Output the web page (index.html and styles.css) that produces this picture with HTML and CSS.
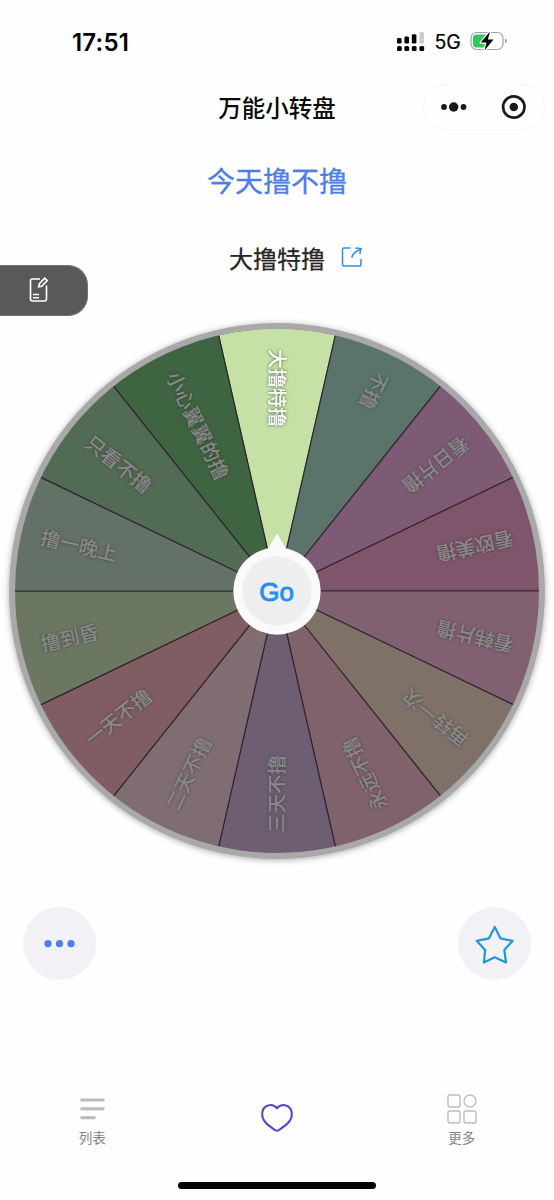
FILE: index.html
```html
<!DOCTYPE html>
<html lang="zh-CN">
<head>
<meta charset="utf-8">
<title>万能小转盘</title>
<link rel="stylesheet" href="styles.css">
</head>
<body>
<div class="screen">
  <header class="status">
    <span class="time">17:51</span>
    <div class="indicators">
      <svg class="signal" width="28" height="20" viewBox="0 0 28 20">
        <g fill="#000"><rect x="0" y="6" width="4.6" height="5.6" rx="1.4"/><rect x="7.4" y="4.5" width="4.6" height="7.1" rx="1.4"/><rect x="14.8" y="2.2" width="4.6" height="9.4" rx="1.4"/>
        <rect x="0" y="14" width="4.8" height="5" rx="1.5"/><rect x="7.4" y="14" width="4.8" height="5" rx="1.5"/><rect x="14.8" y="14" width="4.8" height="5" rx="1.5"/><rect x="22.4" y="14" width="4.8" height="5" rx="1.5"/></g>
        <rect x="22.4" y="0" width="4.6" height="11.6" rx="1.2" fill="#ccc"/>
      </svg>
      <span class="net">5G</span>
      <svg class="battery" width="38" height="22" viewBox="0 0 38 22">
        <rect x="1" y="2.5" width="32" height="17" rx="5.5" fill="#fff" stroke="#a3a3a3" stroke-width="1.2"/>
        <path d="M6.5 4.5H16V17.500H6.500Q3 17.500 3 14V8Q3 4.500 6.500 4.500Z" fill="#34c759"/>
        <path d="M35 8.500Q37 9.200 37 11T35 13.500Z" fill="#a3a3a3"/>
        <path d="M20 1.500L10.800 12.500H16.500L14.500 20.500L23.500 9.500H17.800Z" fill="#000" stroke="#fff" stroke-width="2.400" paint-order="stroke" stroke-linejoin="round"/>
      </svg>
    </div>
  </header>
  <nav class="navbar">
    <h1>万能小转盘</h1>
    <div class="capsule">
      <svg width="60" height="28" viewBox="0 0 60 28" fill="#1a1a1a"><circle cx="20" cy="14" r="2.900"/><circle cx="29.700" cy="14" r="4.700"/><circle cx="39.500" cy="14" r="2.900"/></svg>
      <i class="divider"></i>
      <svg width="60" height="28" viewBox="0 0 60 28"><circle cx="29.800" cy="14" r="10.700" fill="none" stroke="#1a1a1a" stroke-width="2.700"/><circle cx="29.800" cy="14" r="4.300" fill="#1a1a1a"/></svg>
    </div>
  </nav>
  <h2 class="question">今天撸不撸</h2>
  <div class="result">
    <span>大撸特撸</span>
    <svg width="22" height="22" viewBox="0 0 22 22" fill="none" stroke="#2b8fe6" stroke-width="1.500"><path d="M9.500 2H3Q1.500 2 1.500 3.500V18.500Q1.500 20 3 20H18.500Q20 20 20 18.500V13"/><path d="M10.700 11.500C12 8 14.500 5 19.500 3.500M14.500 2L20 2.700L18.800 8"/></svg>
  </div>
  <button class="edit" aria-label="编辑">
    <svg width="22" height="28" viewBox="0 0 22 28" fill="none" stroke="#fff" stroke-width="1.600"><path d="M12 3H4.500Q2.500 3 2.500 5V23Q2.500 25 4.500 25H16.500Q18.500 25 18.500 23V9.500"/><path d="M10.700 10.800L11.400 7.700L16.700 2.200L19.200 4.600L13.800 10.200Z"/><path d="M5 18.500H11M5 21.700H11"/></svg>
  </button>

  <main class="wheel-area">
    <svg id="wheel" class="wheel" width="554" height="560" viewBox="-277 -280 554 560">
      <circle class="rim" r="267.700"/>
      <g id="slices"></g>
      <g id="labels"></g>
      <g class="go">
        <path d="M-11 -39L0 -57.500L11 -39Z" fill="#fafafa"/>
        <circle r="43.700" fill="#fafafa"/>
        <circle r="34.700" fill="#eee"/>
        <text class="go-text" x="-0.500" y="9.500">Go</text>
      </g>
    </svg>
  </main>

  <section class="actions">
    <button class="round" aria-label="更多选项"><svg width="40" height="40" viewBox="0 0 40 40" fill="#4d7fe8"><circle cx="8" cy="19.700" r="3.600"/><circle cx="19.500" cy="19.700" r="3.600"/><circle cx="31" cy="19.700" r="3.600"/></svg></button>
    <button class="round" aria-label="收藏"><svg width="44" height="44" viewBox="0 0 44 44" fill="none" stroke="#2098d8" stroke-width="2.200" stroke-linejoin="round"><path d="M21.800 5L27.400 16.300L39.600 18.900L31.300 27.900L33 40.500L21.800 35.300L10.900 40.500L12.200 27.900L3.800 18.900L16 16.300Z"/></svg></button>
  </section>

  <footer class="tabs">
    <div class="tab">
      <svg width="30" height="32" viewBox="0 0 30 32" fill="#bbb"><rect x="3.500" y="5.500" width="24" height="3"/><rect x="3.500" y="14.300" width="24" height="3"/><rect x="3.500" y="23.200" width="15" height="3"/></svg>
      <span>列表</span>
    </div>
    <div class="tab heart">
      <svg width="34" height="30" viewBox="0 0 34 30" fill="none" stroke="#5446cf" stroke-width="2.100" stroke-linejoin="round"><path d="M17 5.300C13 .300 2.200 .500 2.200 11.500C2.200 18.500 9 23 15.200 27.200Q17 28.300 18.800 27.200C25 23 31.800 18.500 31.800 11.500C31.800 .500 21 .300 17 5.300Z"/></svg>
    </div>
    <div class="tab">
      <svg width="30" height="32" viewBox="0 0 30 32" fill="none" stroke="#bdbdbd" stroke-width="1.400"><rect x="1" y="2" width="12" height="12" rx="2"/><circle cx="23" cy="8" r="6"/><rect x="1" y="18" width="12" height="12" rx="2"/><rect x="17" y="18" width="12" height="12" rx="2"/></svg>
      <span>更多</span>
    </div>
  </footer>
  <div class="home"></div>
</div>
<script src="wheel.js"></script>
</body>
</html>
```
FILE: styles.css
```css
* { box-sizing: border-box; }
body { margin: 0; background: #fefefe; font-family: "Liberation Sans", "Noto Sans CJK SC", sans-serif; }
h1, h2 { margin: 0; }
button { border: 0; padding: 0; }
svg { display: block; flex: none; }
.screen { width: 554px; height: 1200px; display: flex; flex-direction: column; overflow: hidden; }
.status { height: 84px; padding: 0 46px 0 72px; display: flex; align-items: center; justify-content: space-between; }
.time { padding-top: 1px; font: 600 24px/28px Inter, sans-serif; letter-spacing: .2px; }
.indicators { display: flex; align-items: center; }
.signal { margin-top: -1px; }
.net { width: 45px; text-align: center; font: 400 19.500px/24px Inter, sans-serif; letter-spacing: -.2px; -webkit-text-stroke: .2px #000; }
.battery { margin-top: -2px; }
.navbar { height: 46px; padding: 0 10px; display: grid; grid-template-columns: 121px 1fr 121px; align-items: center; }
.navbar h1 { grid-column: 2; padding-top: 4px; text-align: center; font-size: 23.500px; line-height: 34px; font-weight: 500; color: #0a0a0a; }
.capsule { width: 122px; height: 46px; border: 1.500px solid #f5f5f5; border-radius: 23px; display: flex; align-items: center; justify-content: center; }
.divider { width: 1px; height: 28px; background: #f2f2f2; }
.question { margin-top: 32px; height: 42px; text-align: center; font-size: 28px; line-height: 42px; font-weight: 400; color: #4c7ee6; -webkit-text-stroke: .3px #4c7ee6; }
.result { margin-top: 38px; height: 36px; padding-left: 229px; display: flex; align-items: center; gap: 16px; font-size: 24px; line-height: 36px; color: #262626; -webkit-text-stroke: .25px #262626; }
.result svg { margin-top: -7px; }
.edit { margin-top: -13.500px; width: 88px; height: 51px; border: 1px solid #737373; border-left: 0; border-radius: 0 20px 20px 0; background: #595959; display: flex; align-items: center; padding-left: 28px; }
.wheel-area { margin-top: -4.500px; height: 560px; }
.rim { fill: #a9a9a9; filter: drop-shadow(0 1px 3px rgba(0, 0, 0, .35)); }
.slice { stroke: rgba(45, 30, 40, .85); stroke-width: 1.200; }
.slice-edge { fill: none; stroke: #a9a9a9; stroke-width: 5.700; }
.label { font: 500 19.500px "Noto Sans CJK SC", sans-serif; fill: #898989; text-shadow: 0 0 3px rgba(35, 35, 35, .6); }
.label-active { fill: #fff; text-shadow: 0 0 3px rgba(0, 0, 0, .65); }
.go-text { font: 400 26px "Liberation Sans", sans-serif; fill: #248ff3; stroke: #248ff3; stroke-width: .9px; text-anchor: middle; }
.actions { margin-top: 36px; height: 73px; padding: 0 23px; display: flex; justify-content: space-between; }
.round { width: 73px; height: 73px; border-radius: 50%; background: #f1f1f6; display: flex; align-items: center; justify-content: center; }
.tabs { margin-top: 112.500px; height: 72px; display: grid; grid-template-columns: 1fr 1fr 1fr; }
.tab { display: flex; flex-direction: column; align-items: center; font-size: 13.500px; line-height: 20px; color: #858585; }
.tab span { margin-top: 4px; }
.heart { padding-top: 10px; }
.home { margin: 17px auto 0; width: 198px; height: 7px; border-radius: 4px; background: #000; flex: none; }
```
FILE: wheel.js
```js
const options = [
  ["大撸特撸", "#c5e1a5"],
  ["不撸", "#5a746b"],
  ["看日片撸", "#7e5b74"],
  ["看欧美撸", "#7f556b"],
  ["看韩片撸", "#806071"],
  ["再转一次", "#7f7168"],
  ["永远不撸", "#80636a"],
  ["三天不撸", "#6e5e73"],
  ["二天不撸", "#7f6d72"],
  ["一天不撸", "#805d62"],
  ["撸到昏", "#6c7761"],
  ["撸一晚上", "#647166"],
  ["只看不撸", "#526b54"],
  ["小心翼翼的撸", "#3f6441"]
];
const ns = "http://www.w3.org/2000/svg";
const step = 360 / options.length;
const radius = 263;
const half = step * Math.PI / 360;
const dx = radius * Math.sin(half);
const dy = -radius * Math.cos(half);
const slices = document.getElementById("slices");
const labels = document.getElementById("labels");

function add(parent, tag, attrs) {
  const node = document.createElementNS(ns, tag);
  for (const key in attrs) node.setAttribute(key, attrs[key]);
  parent.appendChild(node);
  return node;
}

options.forEach(([name, color], i) => {
  const angle = i * step;
  add(slices, "path", {
    d: `M0 0L${-dx} ${dy}A${radius} ${radius} 0 0 1 ${dx} ${dy}Z`,
    fill: color,
    class: "slice",
    transform: `rotate(${angle})`
  });
  const text = add(labels, "text", {
    class: i === 0 ? "label label-active" : "label",
    transform: `rotate(${angle}) translate(0 -242) rotate(90)`,
    y: 7
  });
  text.textContent = name;
});
add(slices, "circle", { r: 264.8, class: "slice-edge" });
```
